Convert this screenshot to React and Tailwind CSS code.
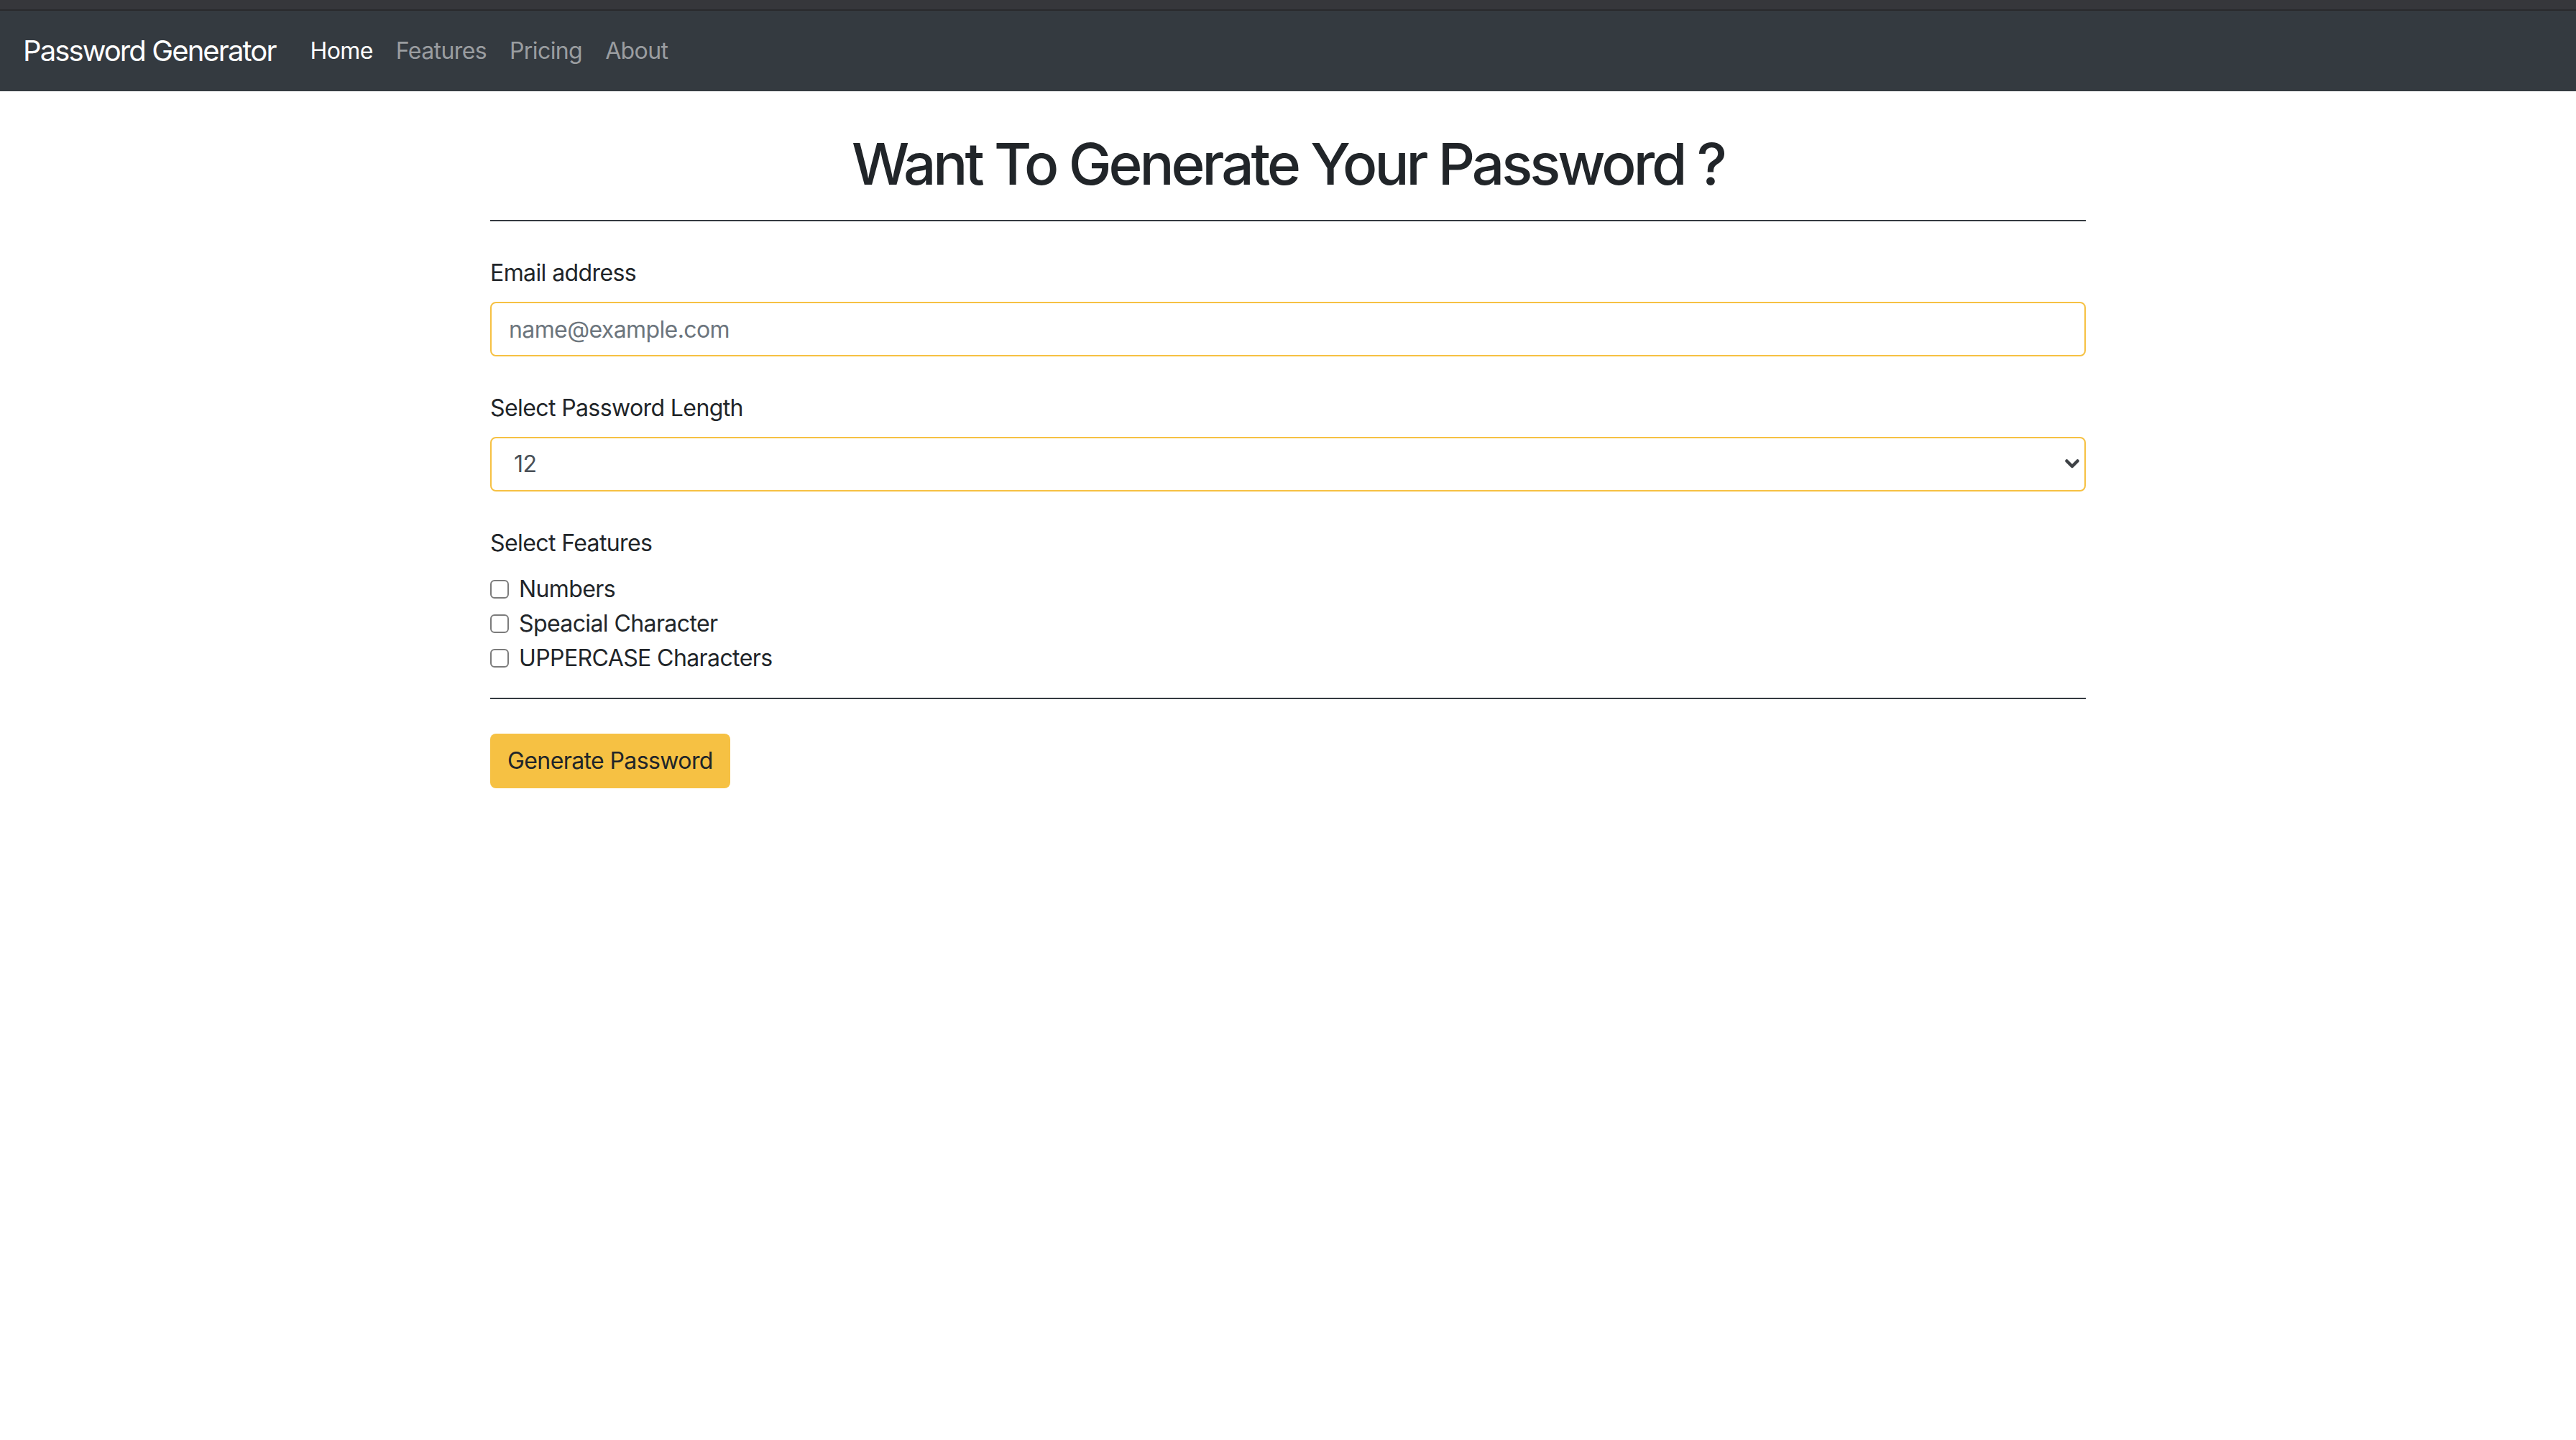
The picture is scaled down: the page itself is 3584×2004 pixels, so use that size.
import { useState } from "react";

const LINKS = [
  { label: "Home", active: true },
  { label: "Features" },
  { label: "Pricing" },
  { label: "About" },
];

const FEATURES = ["Numbers", "Speacial Character", "UPPERCASE Characters"];

function App() {
  const [email, setEmail] = useState("");
  const [length, setLength] = useState("12");
  const [checked, setChecked] = useState({});

  return (
    <div className="min-h-screen bg-white font-['Inter','Noto_Sans',sans-serif] tracking-[-0.6px] text-[#212529]">
      <div className="h-[15px] border-b-2 border-[#292a2d] bg-[#36373b]" />
      <nav className="flex h-[112px] items-center bg-[#343a40] px-[32px]">
        <a
          href="#"
          className="mr-[32px] text-[40px] leading-[60px] tracking-[-1.9px] text-white"
        >
          Password Generator
        </a>
        <ul className="flex items-center">
          {LINKS.map((link) => (
            <li key={link.label}>
              <a
                href="#"
                className={`block px-[16px] text-[32px] leading-[48px] ${
                  link.active ? "text-white" : "text-[#9a9da0]"
                }`}
              >
                {link.label}
              </a>
            </li>
          ))}
        </ul>
      </nav>

      <main className="mx-auto w-[2220px]">
        <h1 className="mt-[53px] text-center text-[80px] leading-[96px] font-medium tracking-[-4px]">
          Want To Generate Your Password ?
        </h1>
        <hr className="mt-[30px] border-t-2 border-[#343a40]" />

        <form onSubmit={(event) => event.preventDefault()}>
          <label className="mt-[48px] block text-[32px] leading-[48px]">
            Email address
          </label>
          <input
            type="email"
            value={email}
            onChange={(event) => setEmail(event.target.value)}
            placeholder="name@example.com"
            className="mt-[16px] block h-[76px] w-full rounded-[8px] border-2 border-[#f6c143] px-[24px] text-[32px] text-[#495057] outline-none placeholder:text-[#6c757d]"
          />

          <label className="mt-[48px] block text-[32px] leading-[48px]">
            Select Password Length
          </label>
          <div className="relative mt-[16px]">
            <select
              value={length}
              onChange={(event) => setLength(event.target.value)}
              className="block h-[76px] w-full appearance-none rounded-[8px] border-2 border-[#f6c143] bg-white pl-[31px] text-[32px] text-[#495057] outline-none"
            >
              {[8, 10, 12, 14, 16, 20].map((n) => (
                <option key={n} value={n}>
                  {n}
                </option>
              ))}
            </select>
            <svg
              className="pointer-events-none absolute right-[9px] top-[31px] h-[14px] w-[20px]"
              viewBox="0 0 20 14"
              fill="none"
            >
              <path
                d="M2.5 2.5 L10 10 L17.5 2.5"
                stroke="#3d4145"
                strokeWidth="4.5"
                strokeLinecap="round"
                strokeLinejoin="round"
              />
            </svg>
          </div>

          <p className="mt-[48px] text-[32px] leading-[48px]">Select Features</p>
          <div className="mt-[16px]">
            {FEATURES.map((feature) => (
              <label
                key={feature}
                className="flex h-[48px] items-center text-[32px] leading-[48px]"
              >
                <input
                  type="checkbox"
                  checked={!!checked[feature]}
                  onChange={() =>
                    setChecked((prev) => ({ ...prev, [feature]: !prev[feature] }))
                  }
                  className="mr-[14px] h-[26px] w-[26px] appearance-none rounded-[6px] border-2 border-[#7b7b7b] bg-white checked:border-[#f6c143] checked:bg-[#f6c143]"
                />
                {feature}
              </label>
            ))}
          </div>

          <hr className="mt-[31px] border-t-2 border-[#343a40]" />

          <button
            type="submit"
            className="mt-[48px] h-[76px] rounded-[8px] bg-[#f6c143] px-[24px] text-[32px] text-[#212529]"
          >
            Generate Password
          </button>
        </form>
      </main>
    </div>
  );
}

export default App;
